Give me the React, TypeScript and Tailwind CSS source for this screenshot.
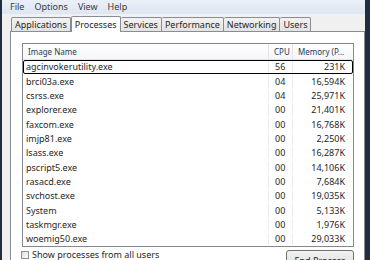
import { useState } from 'react'

const rows: [string, string, string][] = [
  ['agcinvokerutility.exe', '56', '231K'],
  ['brci03a.exe', '04', '16,594K'],
  ['csrss.exe', '04', '25,971K'],
  ['explorer.exe', '00', '21,401K'],
  ['faxcom.exe', '00', '16,768K'],
  ['imjp81.exe', '00', '2,250K'],
  ['lsass.exe', '00', '16,287K'],
  ['pscript5.exe', '00', '14,106K'],
  ['rasacd.exe', '00', '7,684K'],
  ['svchost.exe', '00', '19,035K'],
  ['System', '00', '5,133K'],
  ['taskmgr.exe', '00', '1,976K'],
  ['woemig50.exe', '00', '29,033K'],
]

const tabs = ['Applications', 'Processes', 'Services', 'Performance', 'Networking', 'Users']

export default function App() {
  const [allUsers, setAllUsers] = useState(false)

  return (
    <div
      className="w-[370px] h-[260px] overflow-hidden flex bg-[#1f2d3f] pl-[2px] pr-[5px] text-[#262626]"
      style={{ fontFamily: '"Noto Sans", "DejaVu Sans", sans-serif' }}
    >
      <div className="flex-1 flex flex-col bg-[#f0f0f0]">
        {/* menu */}
        <div className="h-[14px] shrink-0 flex items-center gap-[10px] pl-[8px] text-[9px] text-[#3c3c3c] bg-gradient-to-b from-[#eaf0f8] to-[#dde6f2]">
          <span>File</span>
          <span>Options</span>
          <span>View</span>
          <span>Help</span>
        </div>

        {/* tabs */}
        <div className="h-[17px] shrink-0 flex items-end pl-[9px]">
          {tabs.map((t) =>
            t === 'Processes' ? (
              <div
                key={t}
                className="h-[16px] -mb-px px-[3px] flex items-center bg-white border border-b-0 border-[#898c95] rounded-t-[2px] text-[9px] relative z-10"
              >
                {t}
              </div>
            ) : (
              <div
                key={t}
                className="h-[14px] px-[3px] flex items-center border border-b-0 border-l-0 first:border-l border-[#898c95] bg-gradient-to-b from-[#f2f2f2] to-[#e3e3e3] text-[9px] rounded-t-[2px]"
              >
                {t}
              </div>
            )
          )}
        </div>

        {/* panel */}
        <div className="flex-1 ml-[8px] border border-[#898c95] bg-white flex flex-col">
          <div className="mt-[11px] ml-[11px] mr-[10px] border border-[#828790] flex flex-col">
            <div className="h-[16px] flex items-center text-[8px] text-[#1e395b] bg-gradient-to-b from-white to-[#f4f6f9] border-b border-[#e5e5e5]">
              <div className="w-[245px] pl-[5px]">Image Name</div>
              <div className="w-[24px] pl-[5px] border-l border-[#e5e5e5] h-full flex items-center">CPU</div>
              <div className="flex-1 pl-[5px] border-l border-[#e5e5e5] h-full flex items-center">Memory (P...</div>
            </div>
            {rows.map(([name, cpu, mem], i) => (
              <div
                key={name}
                className={`h-[14.33px] flex items-center text-[9px] ${
                  i === 0 ? 'border border-black rounded-[2px]' : 'border border-transparent'
                }`}
              >
                <div className="w-[244px] pl-[2px]">{name}</div>
                <div className="w-[24px] pl-[6px] h-full flex items-center border-l border-[#ececec]">{cpu}</div>
                <div className="flex-1 pr-[7px] h-full flex items-center justify-end border-l border-[#ececec]">{mem}</div>
              </div>
            ))}
          </div>
          <div className="flex items-start justify-between ml-[10px] mr-[10px] mt-[3px]">
            <label className="flex items-center gap-[3px] text-[9px] leading-[10px]">
              <input
                type="checkbox"
                checked={allUsers}
                onChange={(e) => setAllUsers(e.target.checked)}
                className="w-[8px] h-[8px] m-0 appearance-none border border-[#8f8f8f] bg-gradient-to-br from-[#dcdcdc] to-white"
              />
              Show processes from all users
            </label>
            <button className="w-[68px] h-[20px] border border-[#707070] rounded-[3px] bg-gradient-to-b from-[#f2f2f2] to-[#dcdcdc] text-[9px] leading-[12px] pt-[2px] self-start">
              End Process
            </button>
          </div>
        </div>
      </div>
    </div>
  )
}
